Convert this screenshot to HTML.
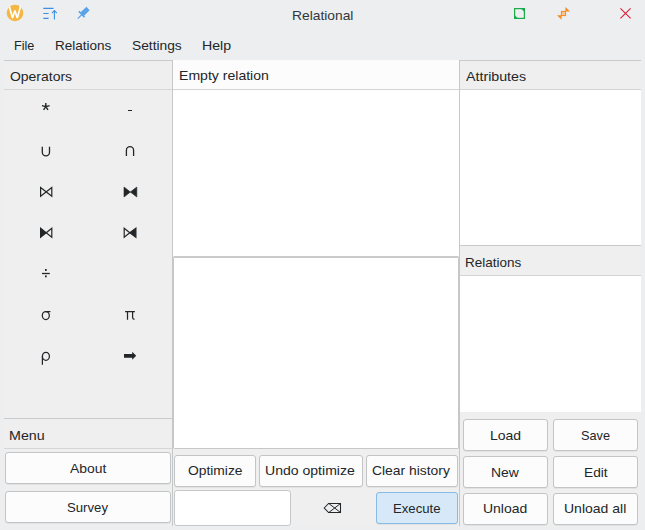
<!DOCTYPE html>
<html><head><meta charset="utf-8">
<style>
*{box-sizing:border-box;margin:0;padding:0}
html,body{width:645px;height:530px;overflow:hidden;background:#eceef0;font-family:"Liberation Sans",sans-serif;color:#232629;font-size:14px}
.a{position:absolute}
.t{position:absolute;white-space:nowrap;line-height:1;font-size:13.0px;transform-origin:0 0}
.btn{position:absolute;background:#fcfcfc;border:1px solid #c3c4c5;border-radius:3px;box-shadow:0 1px 0 rgba(0,0,0,0.05)}
svg{position:absolute;overflow:visible}
</style></head><body>
<!-- title bar icons -->
<svg style="left:0;top:0" width="30" height="30" viewBox="0 0 30 30">
<circle cx="15" cy="13" r="8.3" fill="#f5b642"/>
<path d="M9.4 6.8 L12.5 18 L14.9 10.6 L17.3 18 L20.6 6.2" fill="none" stroke="#fff" stroke-width="1.7" stroke-linejoin="bevel"/>
</svg>
<svg style="left:36px;top:0" width="30" height="30" viewBox="0 0 30 30">
<path d="M7.3 8.4h10.2M7.3 13.5h5.3M7.3 18.4h5.3" stroke="#3c8fe3" stroke-width="1.1"/>
<path d="M18.4 19.6V10.4M16 13.1l2.4-2.6 2.4 2.6" fill="none" stroke="#3c8fe3" stroke-width="1.1"/>
</svg>
<svg style="left:0;top:0" width="100" height="30" viewBox="0 0 100 30">
<path d="M77.8 18.6 L81.8 14.6" stroke="#5aa3e8" stroke-width="1.3"/>
<path d="M80.4 12.6 L86.4 6.8 L89.6 10.2 L83.6 16.2 Z" fill="#5aa3e8"/>
<path d="M78.9 11.4 L84.6 17.2" stroke="#5aa3e8" stroke-width="1.6"/>
</svg>
<svg style="left:0;top:0" width="645" height="30" viewBox="0 0 645 30">
<rect x="514.6" y="8.6" width="9.8" height="9.8" fill="none" stroke="#1aab4b" stroke-width="1.2"/>
<path d="M520.4 8H525V12.6Z M518.6 19H514V14.4Z" fill="#1aab4b"/>
<path d="M565.4 7 L570 11.6 L565.4 11.6 Z M561.6 19.8 L557 15.2 L561.6 15.2 Z" fill="#f78a22"/>
<rect x="561.4" y="11.4" width="4.2" height="4.2" fill="#f8c590" stroke="#f78a22" stroke-width="1"/>
<path d="M620.4 8.4 L630.6 18.4 M630.6 8.4 L620.4 18.4" stroke="#dc1f3a" stroke-width="1.1"/>
</svg>

<!-- menu bar -->

<!-- left panel -->
<div class="a" style="left:4px;top:60px;width:637px;height:466px;background:#efefef"></div>
<div class="a" style="left:4px;top:60px;width:169px;height:466px;background:#efefef"></div>
<div class="a" style="left:4px;top:60px;width:169px;height:1px;background:#c9cacb"></div>
<div class="a" style="left:4px;top:89px;width:168px;height:1px;background:#d6d6d6"></div>
<div class="a" style="left:172px;top:60px;width:1px;height:466px;background:#c6c7c8"></div>
<div class="a" style="left:4px;top:418px;width:168px;height:1px;background:#c9cacb"></div>
<div class="a" style="left:4px;top:448px;width:168px;height:1px;background:#d6d6d6"></div>
<div class="btn" style="left:5px;top:452px;width:166px;height:32px"></div>
<div class="btn" style="left:5px;top:491px;width:166px;height:32px"></div>

<!-- operators -->
<div class="a" style="left:128px;top:110px;width:4px;height:1.4px;background:#232629"></div>
<svg style="left:0;top:0" width="172" height="400" viewBox="0 0 172 400">
<path d="M42.3 146.8 V152.2 A3.6 3.6 0 0 0 49.5 152.2 V146.8" fill="none" stroke="#232629" stroke-width="1.3"/>
<path d="M126.4 156 V150.3 A3.6 3.6 0 0 1 133.6 150.3 V156" fill="none" stroke="#232629" stroke-width="1.3"/>
<!-- bowtie open -->
<path d="M40.6 187.5 L51.8 196.3 L51.8 187.5 L40.6 196.3 Z" fill="none" stroke="#232629" stroke-width="1.2" stroke-linejoin="miter"/>
<!-- black bowtie -->
<path d="M124 187 L136.8 197 L136.8 187 L124 197 Z" fill="#232629" stroke="#232629" stroke-width="0.6"/>
<!-- left filled -->
<path d="M40.6 228.2 L46.2 232.75 L40.6 237.3 Z" fill="#232629" stroke="#232629" stroke-width="1.2"/>
<path d="M46.2 232.75 L51.8 228.2 L51.8 237.3 Z" fill="none" stroke="#232629" stroke-width="1.2"/>
<!-- right filled -->
<path d="M124.2 228.2 L129.8 232.75 L124.2 237.3 Z" fill="none" stroke="#232629" stroke-width="1.2"/>
<path d="M129.8 232.75 L135.9 228.2 L135.9 237.3 Z" fill="#232629" stroke="#232629" stroke-width="1.2"/>
<!-- asterisk -->
<path d="M45.8 106.6 V103 M45.8 106.6 L42 105.6 M45.8 106.6 L49.6 105.6 M45.8 106.6 L43.6 109.9 M45.8 106.6 L48 109.9" stroke="#232629" stroke-width="1.4" stroke-linecap="butt"/>
<!-- divide -->
<path d="M42 273.5 H49.8" stroke="#232629" stroke-width="1.3"/>
<rect x="45" y="269" width="1.7" height="1.9" fill="#232629"/>
<rect x="45" y="275.4" width="1.7" height="1.9" fill="#232629"/>
<!-- sigma -->
<ellipse cx="45.8" cy="315.6" rx="3.5" ry="4" fill="none" stroke="#232629" stroke-width="1.25"/>
<path d="M45.8 311.6 H50.4" stroke="#232629" stroke-width="1.25"/>
<!-- pi -->
<path d="M125.1 311.6 H134.9 M127.5 311.6 V319.8 M132.6 311.6 V317.6 Q132.6 319.3 134.5 319.3" fill="none" stroke="#232629" stroke-width="1.25"/>
<!-- rho -->
<ellipse cx="45.9" cy="356.3" rx="3.5" ry="4" fill="none" stroke="#232629" stroke-width="1.25"/>
<path d="M42.4 356.3 V364.8" stroke="#232629" stroke-width="1.25"/>
<!-- arrow -->
<path d="M124 353.9 H132.2 V351.8 L136.2 355.8 L132.2 359.8 V357.7 H124 Z" fill="#232629"/>
</svg>

<!-- middle -->
<div class="a" style="left:173px;top:60px;width:286px;height:196px;background:#fff"></div>
<div class="a" style="left:173px;top:60px;width:286px;height:29px;background:#fcfcfc"></div>
<div class="a" style="left:173px;top:89px;width:286px;height:1px;background:#d3d4d5"></div>
<div class="a" style="left:173px;top:256px;width:286px;height:193px;background:#fff;border:1px solid #c6c7c8;border-top:2px solid #c9cacb;border-radius:2px"></div>
<div class="btn" style="left:174px;top:455px;width:82px;height:32px"></div>
<div class="btn" style="left:259px;top:455px;width:104px;height:32px"></div>
<div class="btn" style="left:366px;top:455px;width:92px;height:32px"></div>
<div class="a" style="left:174px;top:490px;width:117px;height:36px;background:#fff;border:1px solid #c6c7c8;border-radius:3px"></div>
<svg style="left:0;top:0" width="460" height="530" viewBox="0 0 460 530">
<path d="M324.2 508 L328.6 503.5 H340.5 V512.5 H328.6 Z" fill="none" stroke="#232629" stroke-width="1.05" stroke-linejoin="miter"/>
<path d="M328.8 503.5 L340.5 512.5 M340.5 503.5 L328.8 512.5" stroke="#232629" stroke-width="1"/>
</svg>
<div class="btn" style="left:376px;top:492px;width:82px;height:32px;background:#d7e9f8;border-color:#85bbe6"></div>

<!-- right panel -->
<div class="a" style="left:459px;top:60px;width:1px;height:466px;background:#c6c7c8"></div>
<div class="a" style="left:460px;top:60px;width:181px;height:466px;background:#efefef"></div>
<div class="a" style="left:460px;top:60px;width:181px;height:1px;background:#c9cacb"></div>
<div class="a" style="left:460px;top:89px;width:181px;height:1px;background:#d3d4d5"></div>
<div class="a" style="left:460px;top:90px;width:181px;height:155px;background:#fff"></div>
<div class="a" style="left:460px;top:245px;width:181px;height:1px;background:#c9cacb"></div>
<div class="a" style="left:460px;top:275px;width:181px;height:1px;background:#d3d4d5"></div>
<div class="a" style="left:460px;top:276px;width:181px;height:136px;background:#fff"></div>
<div class="btn" style="left:463px;top:419px;width:85px;height:32px"></div>
<div class="btn" style="left:553px;top:419px;width:85px;height:32px"></div>
<div class="btn" style="left:463px;top:456px;width:85px;height:32px"></div>
<div class="btn" style="left:553px;top:456px;width:85px;height:32px"></div>
<div class="btn" style="left:463px;top:493px;width:85px;height:32px"></div>
<div class="btn" style="left:553px;top:493px;width:85px;height:32px"></div>
<div class="t" style="left:291.64px;top:9px;transform:scaleX(1.0625);color:#31363b">Relational</div>
<div class="t" style="left:13.93px;top:39px;transform:scaleX(0.9700)">File</div>
<div class="t" style="left:54.86px;top:39px;transform:scaleX(1.0396)">Relations</div>
<div class="t" style="left:131.54px;top:39px;transform:scaleX(1.0587)">Settings</div>
<div class="t" style="left:201.71px;top:39px;transform:scaleX(1.0880)">Help</div>
<div class="t" style="left:10.45px;top:70px;transform:scaleX(1.0728)">Operators</div>
<div class="t" style="left:178.62px;top:69px;transform:scaleX(1.0815)">Empty relation</div>
<div class="t" style="left:466.00px;top:70px;transform:scaleX(1.0945)">Attributes</div>
<div class="t" style="left:465.46px;top:256px;transform:scaleX(1.0377)">Relations</div>
<div class="t" style="left:9.40px;top:429px;transform:scaleX(1.0968)">Menu</div>
<div class="t" style="left:69.60px;top:462px;transform:scaleX(1.0706)">About</div>
<div class="t" style="left:66.89px;top:501px;transform:scaleX(1.0125)">Survey</div>
<div class="t" style="left:187.70px;top:464px;transform:scaleX(1.0627)">Optimize</div>
<div class="t" style="left:265.12px;top:464px;transform:scaleX(1.0805)">Undo optimize</div>
<div class="t" style="left:372.13px;top:464px;transform:scaleX(1.0667)">Clear history</div>
<div class="t" style="left:392.59px;top:502px;transform:scaleX(1.0130)">Execute</div>
<div class="t" style="left:489.73px;top:429px;transform:scaleX(1.0741)">Load</div>
<div class="t" style="left:580.62px;top:429px;transform:scaleX(0.9786)">Save</div>
<div class="t" style="left:491.13px;top:466px;transform:scaleX(1.0680)">New</div>
<div class="t" style="left:583.55px;top:466px;transform:scaleX(1.0524)">Edit</div>
<div class="t" style="left:482.93px;top:502px;transform:scaleX(1.0750)">Unload</div>
<div class="t" style="left:564.22px;top:502px;transform:scaleX(1.0768)">Unload all</div>
</body></html>
